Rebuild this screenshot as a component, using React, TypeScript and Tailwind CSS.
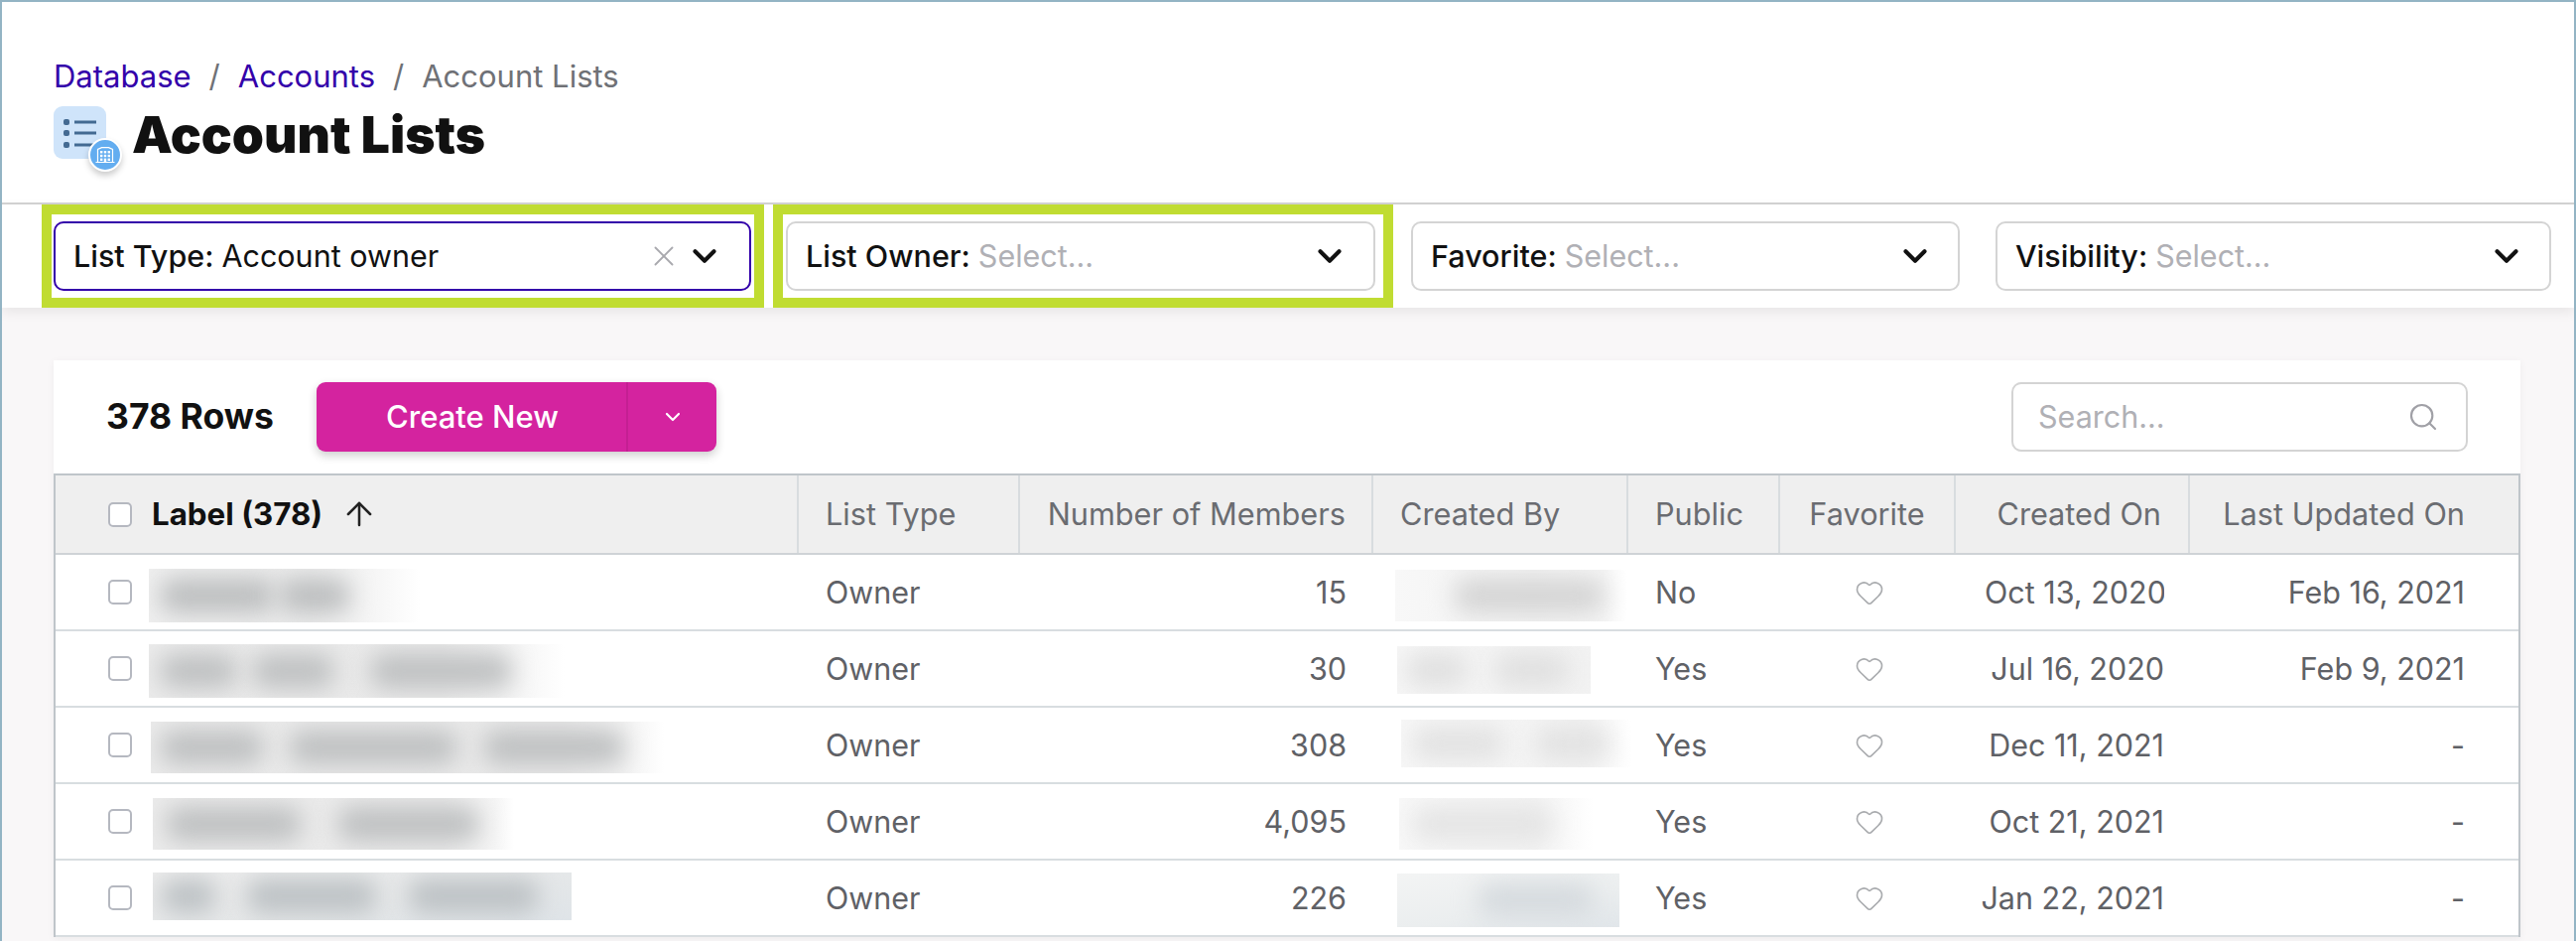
import type { CSSProperties, ReactNode } from "react";
import { ChevronDown, X, Search, ArrowUp, Heart } from "lucide-react";

const GRID = "grid grid-cols-[749px_223px_356px_257px_153px_177px_236px_331px]";

type Blob = [number, number];
type BlurSpec = { w: number; h: number; ml: number; top: number; bg: string; blobs: Blob[]; tone: string };

const rows: {
  label: BlurSpec;
  count: string;
  owner: BlurSpec;
  pub: string;
  created: string;
  clip?: boolean;
  updated: string;
}[] = [
  {
    label: { w: 273, h: 54, ml: 17, top: 3, tone: "#bcbebf", bg: "linear-gradient(to right,#efefef,#ececec 60%,#f4f4f4 80%,#fff)", blobs: [[12, 114], [6, 70]] },
    count: "15",
    owner: { w: 233, h: 52, ml: 22, top: 3, tone: "#d4d4d4", bg: "linear-gradient(to right,#f8f8f8,#f2f2f2 60%,#f5f5f5 90%,#fff)", blobs: [[60, 150]] },
    pub: "No",
    created: "Oct 13, 2020",
    clip: true,
    updated: "Feb 16, 2021",
  },
  {
    label: { w: 419, h: 54, ml: 17, top: 2, tone: "#bec0c1", bg: "linear-gradient(to right,#ebebeb,#e9e9e9 70%,#f2f2f2 85%,#fff)", blobs: [[12, 76], [17, 81], [38, 141]] },
    count: "30",
    owner: { w: 195, h: 48, ml: 24, top: 1, tone: "#e0e0e0", bg: "linear-gradient(to right,#f6f6f6,#f2f2f2)", blobs: [[10, 60], [29, 74]] },
    pub: "Yes",
    created: "Jul 16, 2020",
    updated: "Feb 9, 2021",
  },
  {
    label: { w: 517, h: 52, ml: 19, top: 2, tone: "#bec0c1", bg: "linear-gradient(to right,#ebebeb,#e9e9e9 80%,#f2f2f2 92%,#fff)", blobs: [[10, 103], [27, 168], [28, 140]] },
    count: "308",
    owner: { w: 232, h: 48, ml: 28, top: -2, tone: "#e2e2e2", bg: "linear-gradient(to right,#f7f7f7,#f3f3f3 80%,#fff)", blobs: [[12, 91], [33, 74]] },
    pub: "Yes",
    created: "Dec 11, 2021",
    updated: "-",
  },
  {
    label: { w: 364, h: 52, ml: 21, top: 2, tone: "#bec0c1", bg: "linear-gradient(to right,#ebebeb,#eaeaea 80%,#f5f5f5 95%,#fff)", blobs: [[14, 135], [38, 141]] },
    count: "4,095",
    owner: { w: 196, h: 52, ml: 26, top: 2, tone: "#e4e4e4", bg: "linear-gradient(to right,#f8f8f8,#f3f3f3 70%,#fff)", blobs: [[14, 140]] },
    pub: "Yes",
    created: "Oct 21, 2021",
    updated: "-",
  },
  {
    label: { w: 422, h: 48, ml: 21, top: -2, tone: "#bcc1c4", bg: "linear-gradient(170deg,#ececec,#e6e8e9 55%,#dfe4e8)", blobs: [[9, 54], [32, 130], [33, 130]] },
    count: "226",
    owner: { w: 224, h: 54, ml: 24, top: 2, tone: "#d5dade", bg: "linear-gradient(170deg,#f3f4f4,#ebeeef 60%,#e1e6ea)", blobs: [[82, 116]] },
    pub: "Yes",
    created: "Jan 22, 2021",
    updated: "-",
  },
];

function Blurred({ spec }: { spec: BlurSpec }) {
  const style: CSSProperties = { width: spec.w, height: spec.h, marginLeft: spec.ml, marginTop: spec.top * 2, background: spec.bg };
  return (
    <div className="flex shrink-0 items-center overflow-hidden" style={style}>
      {spec.blobs.map(([gap, w], i) => (
        <div
          key={i}
          className="h-[34px] shrink-0 rounded-[12px] blur-[12px]"
          style={{ marginLeft: gap, width: w, background: spec.tone }}
        />
      ))}
    </div>
  );
}

function Checkbox() {
  return <div className="h-[25px] w-[24px] shrink-0 rounded-[5px] border-2 border-[#b5b8c0] bg-white" />;
}

function FilterSelect({ label, value, clearable, active, textPad = "pl-[18px]", width, chevronPad }: {
  label: string;
  value?: string;
  clearable?: boolean;
  active?: boolean;
  textPad?: string;
  width: string;
  chevronPad: string;
}) {
  return (
    <div className={`flex h-[70px] items-center rounded-[10px] border-2 bg-white ${width} ${textPad} ${chevronPad} ${active ? "border-[#3300aa]" : "border-[#d4d4d4]"}`}>
      <span className="text-[30.5px] font-medium text-[#111111]">{label}</span>
      {value ? (
        <span className="ml-[8px] text-[30.5px] text-[#111111]">{value}</span>
      ) : (
        <span className="ml-[8px] text-[30.5px] text-[#b0b0b5]">Select...</span>
      )}
      <div className="flex-1" />
      {clearable && <X className="mr-[5px] h-[34px] w-[34px] text-[#a9a9ae]" strokeWidth={1.3} />}
      <ChevronDown className="h-[38px] w-[38px] text-[#111111]" strokeWidth={2.6} />
    </div>
  );
}

function Head({ children, align = "text-left", pad = "px-[27px]", last }: { children: ReactNode; align?: string; pad?: string; last?: boolean }) {
  return (
    <div className={`flex items-center text-[30.7px] whitespace-nowrap text-[#6a6c71] ${pad} ${last ? "" : "border-r-2 border-[#d8dcdf]"}`}>
      <span className={`w-full ${align}`}>{children}</span>
    </div>
  );
}

export default function App() {
  return (
    <div className="relative box-border h-[948px] w-[2596px] overflow-hidden border-2 border-b-0 border-[#93b4c4] bg-[#f9f7f8] font-['Inter','Liberation_Sans',sans-serif]">
      <header className="h-[204px] border-b-2 border-[#d4d4d4] bg-white pl-[52px]">
        <nav className="flex items-center pt-[56px] text-[31px] leading-[38px]">
          <span className="text-[#3300aa]">Database</span>
          <span className="mx-[18px] text-[#6f7176]">/</span>
          <span className="text-[#3300aa]">Accounts</span>
          <span className="mx-[18px] text-[#6f7176]">/</span>
          <span className="text-[#6f7176]">Account Lists</span>
        </nav>
        <div className="mt-[8px] flex items-start">
          <div className="relative mt-[3px] h-[53px] w-[53px] rounded-[9px] bg-[#cfe4fa]">
            <svg viewBox="0 0 53 53" className="h-[53px] w-[53px]">
              <g fill="#436a92">
                <rect x="10" y="13" width="6" height="6" rx="2" />
                <rect x="10" y="24" width="6" height="6" rx="2" />
                <rect x="10" y="36" width="6" height="6" rx="2" />
                <rect x="21" y="14.500" width="22" height="3" />
                <rect x="21" y="25.500" width="22" height="3" />
                <rect x="21" y="37.500" width="22" height="3" />
              </g>
            </svg>
            <div className="absolute top-[32px] left-[35px] flex h-[34px] w-[34px] items-center justify-center rounded-full border-2 border-white bg-[#63adf0] shadow-[0_4px_6px_rgba(0,0,0,0.2)]">
              <svg viewBox="0 0 20 16" className="h-[16px] w-[20px]" fill="none">
                <path d="M2.500 15.500V2.500L6.500.700h7l4 1.800v13" stroke="#fff" strokeWidth="1.200" />
                <path d="M.5 15.500h19" stroke="#fff" strokeWidth="1" />
                <g fill="#fff">
                  <rect x="5" y="4" width="2.400" height="2.400" />
                  <rect x="8.800" y="4" width="2.400" height="2.400" />
                  <rect x="12.600" y="4" width="2.400" height="2.400" />
                  <rect x="5" y="7.800" width="2.400" height="2.400" />
                  <rect x="8.800" y="7.800" width="2.400" height="2.400" />
                  <rect x="12.600" y="7.800" width="2.400" height="2.400" />
                  <rect x="5" y="11.600" width="2.400" height="2.400" />
                  <rect x="8.800" y="11.600" width="2.400" height="4" />
                  <rect x="12.600" y="11.600" width="2.400" height="2.400" />
                </g>
              </svg>
            </div>
          </div>
          <h1 className="ml-[26px] text-[51.500px] leading-[62px] font-black text-[#111111]">Account Lists</h1>
        </div>
      </header>

      <div className="relative flex h-[104px] items-start bg-white pl-[40px] shadow-[0_4px_12px_rgba(0,0,0,0.08)]">
        <div className="box-border h-[104px] w-[728px] border-[10px] border-[#c0dc32] pt-[7px] pl-[2px]">
          <FilterSelect label="List Type:" value="Account owner" clearable active width="w-[703px]" chevronPad="pr-[26px]" />
        </div>
        <div className="ml-[9px] box-border h-[104px] w-[625px] border-[10px] border-[#c0dc32] pt-[7px] pl-[3px]">
          <FilterSelect label="List Owner:" width="w-[594px]" chevronPad="pr-[25px]" />
        </div>
        <div className="ml-[18px] pt-[17px]">
          <FilterSelect label="Favorite:" width="w-[553px]" chevronPad="pr-[24px]" />
        </div>
        <div className="ml-[36px] pt-[17px]">
          <FilterSelect label="Visibility:" width="w-[560px]" chevronPad="pr-[24px]" />
        </div>
      </div>

      <main className="mt-[53px] ml-[52px] w-[2486px] bg-white shadow-[0_2px_8px_rgba(0,0,0,0.05)]">
        <div className="flex h-[114px] items-start pt-[22px] pr-[53px] pl-[53px]">
          <div className="flex h-[70px] w-[212px] items-center text-[35.500px] font-bold text-[#111111]">378 Rows</div>
          <div className="flex h-[70px] w-[403px] overflow-hidden rounded-[9px] bg-[#d4239f] shadow-[0_4px_10px_rgba(0,0,0,0.2)]">
            <div className="flex w-[314px] items-center justify-center border-r-2 border-[#c41f93] pl-[2px] text-[31px] font-medium text-white">Create New</div>
            <div className="flex flex-1 items-center justify-center text-white">
              <ChevronDown className="h-[24px] w-[24px]" strokeWidth={2.2} />
            </div>
          </div>
          <div className="flex-1" />
          <div className="flex h-[70px] w-[460px] items-center justify-between rounded-[10px] border-2 border-[#d4d4d4] pr-[27px] pl-[25px]">
            <span className="text-[30.500px] text-[#b0b0b5]">Search...</span>
            <Search className="h-[32px] w-[32px] text-[#a0a0a6]" strokeWidth={1.6} />
          </div>
        </div>

        <div className="border-x-2 border-t-2 border-[#bfc5ca]">
          <div className={`${GRID} h-[80px] border-b-2 border-[#cfd3d6] bg-[#efefef]`}>
            <div className="flex items-center gap-[20px] border-r-2 border-[#d8dcdf] pl-[53px]">
              <Checkbox />
              <span className="text-[31.300px] font-bold text-[#111111]">Label (378)</span>
              <ArrowUp className="-ml-[2px] h-[38px] w-[38px] text-[#222222]" strokeWidth={1.6} />
            </div>
            <Head>List Type</Head>
            <Head align="text-right" pad="pr-[26px] pl-0">Number of Members</Head>
            <Head>Created By</Head>
            <Head>Public</Head>
            <Head align="text-center" pad="px-0">Favorite</Head>
            <Head align="text-right" pad="pr-[27px] pl-0">Created On</Head>
            <Head align="text-right" pad="pr-[54px] pl-0" last>Last Updated On</Head>
          </div>

          {rows.map((r, i) => (
            <div key={i} className={`${GRID} h-[77px] border-b-2 border-[#d8dde0] text-[30.500px] whitespace-nowrap text-[#5f6166]`}>
              <div className="flex items-center pl-[53px]">
                <Checkbox />
                <Blurred spec={r.label} />
              </div>
              <div className="flex items-center pl-[27px]">Owner</div>
              <div className="flex items-center justify-end pr-[27px]">{r.count}</div>
              <div className="flex items-center">
                <Blurred spec={r.owner} />
              </div>
              <div className="flex items-center pl-[27px]">{r.pub}</div>
              <div className="flex items-center justify-center pl-[2px]">
                <Heart className="h-[30px] w-[30px] text-[#a9abae]" strokeWidth={1.3} />
              </div>
              <div className="flex items-center justify-end pr-[26px]">
                <span className={r.clip ? "w-[181px] overflow-hidden" : ""}>{r.created}</span>
              </div>
              <div className="flex items-center justify-end pr-[54px]">{r.updated}</div>
            </div>
          ))}
        </div>
      </main>
    </div>
  );
}
